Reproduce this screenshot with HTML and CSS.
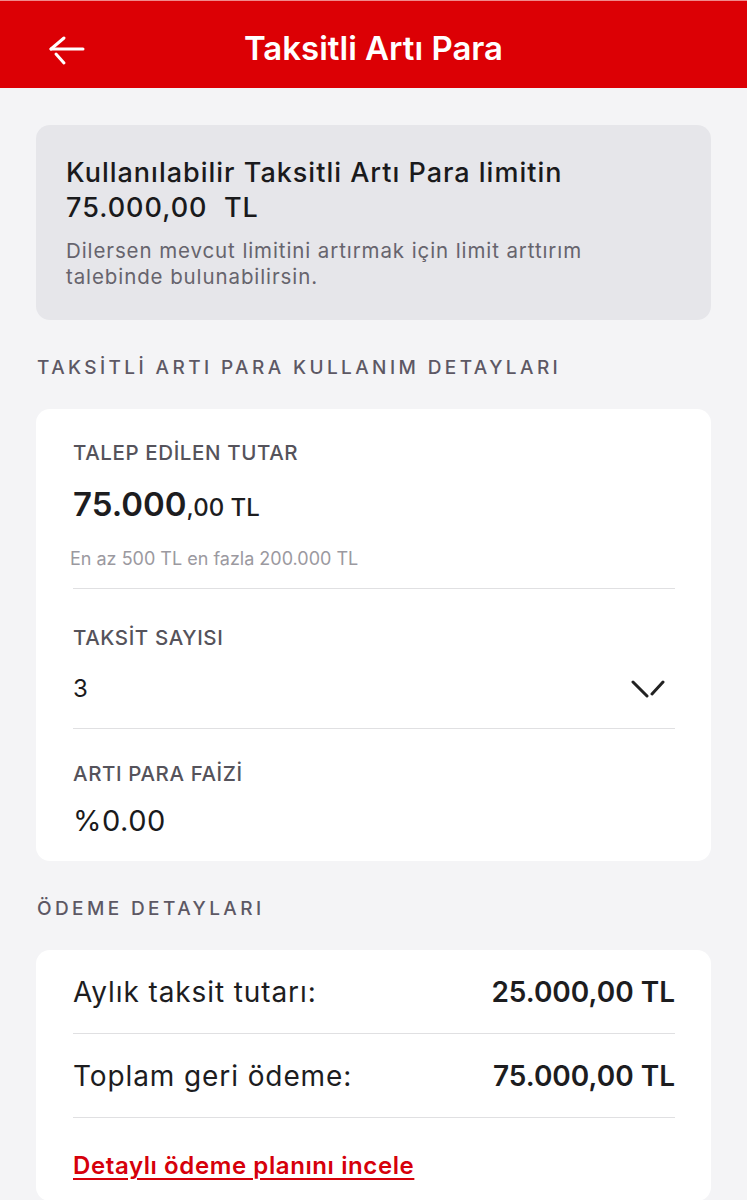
FILE: index.html
```html
<!DOCTYPE html>
<html lang="tr">

<head>
    <meta charset="UTF-8">
    <meta name="viewport" content="width=device-width, initial-scale=1.0">
    <title>Taksitli Artı Para</title>
    <link rel="stylesheet" href="styles.css">
</head>

<body>
    <header class="topbar">
        <button class="back-btn" aria-label="Geri">
            <svg width="38" height="32" viewBox="0 0 38 32" fill="none" stroke="#fff" stroke-width="3"
                stroke-linecap="round">
                <path d="M3 14 H35" />
                <path d="M3 14 L16 3" />
                <path d="M8 19 L16 28" />
            </svg>
        </button>
        <h1>Taksitli Artı Para</h1>
    </header>

    <main class="content">
        <div class="limit-box">
            <p class="limit-title">Kullanılabilir Taksitli Artı Para limitin<br>75.000,00&nbsp; TL</p>
            <p class="limit-desc">Dilersen mevcut limitini artırmak için limit arttırım talebinde bulunabilirsin.</p>
        </div>

        <h2 class="section-title">TAKSİTLİ ARTI PARA KULLANIM DETAYLARI</h2>

        <div class="card">
            <div class="field">
                <div class="field-label">TALEP EDİLEN TUTAR</div>
                <div class="amount"><span class="amount-main">75.000</span>,00 TL</div>
                <div class="field-hint">En az 500 TL en fazla 200.000 TL</div>
            </div>
            <div class="field field-select">
                <div class="field-label">TAKSİT SAYISI</div>
                <div class="select-row">
                    <span class="field-value">3</span>
                    <svg width="34" height="20" viewBox="0 0 34 20" fill="none" stroke="#222" stroke-width="3"
                        stroke-linecap="round">
                        <path d="M2 3 L16 17" />
                        <path d="M21 15 L32 3" />
                    </svg>
                </div>
            </div>
            <div class="field">
                <div class="field-label">ARTI PARA FAİZİ</div>
                <div class="field-value rate">%0.00</div>
            </div>
        </div>

        <h2 class="section-title">ÖDEME DETAYLARI</h2>

        <div class="card payment">
            <div class="pay-row">
                <span>Aylık taksit tutarı:</span>
                <strong>25.000,00 TL</strong>
            </div>
            <div class="pay-row">
                <span>Toplam geri ödeme:</span>
                <strong>75.000,00 TL</strong>
            </div>
            <a class="plan-link" href="#">Detaylı ödeme planını incele</a>
        </div>
    </main>
</body>

</html>
```

FILE: styles.css
```css
body {
    margin: 0;
    background: #f4f4f6;
    font-family: Inter, "Noto Sans", sans-serif;
    color: #1d1d1f;
}

.topbar {
    position: relative;
    height: 88px;
    padding-top: 6px;
    background: #dc0005;
    border-top: 1px solid #f08a8c;
    box-sizing: border-box;
    display: flex;
    align-items: center;
    justify-content: center;
}

.back-btn {
    position: absolute;
    left: 48px;
    top: 34px;
    padding: 0;
    border: 0;
    background: none;
    line-height: 0;
}

.topbar h1 {
    margin: 0;
    color: #fff;
    font-size: 33px;
    font-weight: 600;
}

.content {
    padding: 37px 36px 40px;
}

.limit-box {
    background: #e6e6ea;
    border-radius: 14px;
    padding: 30px 30px 30px;
}

.limit-title {
    margin: 0;
    font-size: 27px;
    line-height: 35px;
    font-weight: 500;
    letter-spacing: 1px;
    color: #1a1a1c;
}

.limit-desc {
    margin: 13px 0 0;
    max-width: 560px;
    font-size: 20.5px;
    line-height: 26px;
    letter-spacing: 0.9px;
    color: #66646d;
}

.section-title {
    margin: 37px 0 30px 1px;
    font-size: 19px;
    font-weight: 500;
    letter-spacing: 3.4px;
    color: #5d5864;
    line-height: 22px;
}

.card {
    background: #fff;
    border-radius: 14px;
    padding: 0 36px 0 37px;
}

.field {
    border-bottom: 1px solid #e0e0e2;
    padding: 32px 0 19px;
}

.field:last-child {
    border-bottom: 0;
    padding-top: 33px;
    padding-bottom: 23px;
}

.field-select {
    padding-top: 37px;
    padding-bottom: 23px;
}

.field-label {
    font-size: 20.5px;
    font-weight: 500;
    letter-spacing: 0.6px;
    color: #55535b;
    line-height: 24px;
}

.amount {
    margin-top: 19px;
    font-size: 24px;
    font-weight: 500;
    line-height: 40px;
}

.amount-main {
    font-size: 33px;
    font-weight: 600;
}

.field-hint {
    margin: 21px 0 0 -3px;
    font-size: 18px;
    line-height: 20px;
    color: #9b99a0;
}

.select-row {
    margin-top: 23px;
    display: flex;
    align-items: center;
    justify-content: space-between;
    padding-right: 10px;
}

.field-value {
    font-size: 24px;
    line-height: 32px;
    color: #1a1a1c;
}

.rate {
    margin-top: 18px;
    font-size: 29px;
    line-height: 34px;
    letter-spacing: 0.5px;
}

.payment {
    padding-bottom: 20px;
}

.pay-row {
    display: flex;
    justify-content: space-between;
    align-items: center;
    height: 84px;
    box-sizing: border-box;
    border-bottom: 1px solid #e0e0e2;
    font-size: 28px;
    letter-spacing: 0.9px;
}

.pay-row strong {
    font-weight: 600;
    letter-spacing: 0;
}

.plan-link {
    display: inline-block;
    margin-top: 33px;
    color: #d6000a;
    font-size: 24px;
    line-height: 30px;
    font-weight: 600;
    letter-spacing: 0.6px;
    text-decoration: underline;
    text-underline-offset: 4px;
}
```
